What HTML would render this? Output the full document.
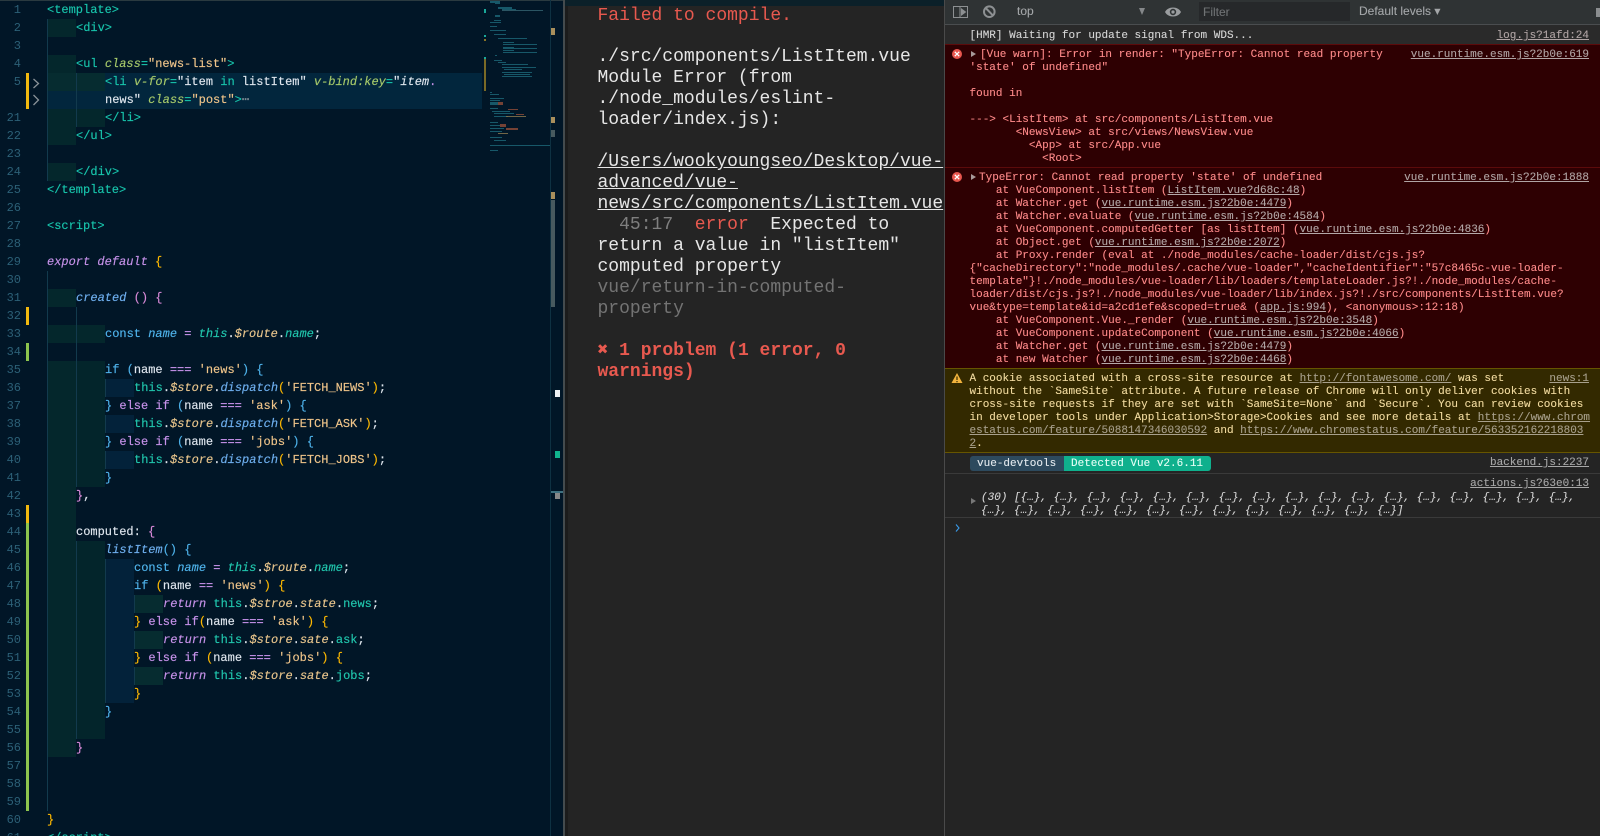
<!DOCTYPE html>
<html><head><meta charset="utf-8"><style>
html,body{margin:0;padding:0;background:#242424}
#r{position:relative;width:1600px;height:836px;overflow:hidden;background:#242424;font-family:"Liberation Mono",monospace}
#r div,#r span.a{position:absolute}
.b{background:#04272c}.g{background:#03252b}.n{background:#03223a}.d{background:#062c30}
.v{width:1px;background:#123a4d}
.ln,.t{height:18px;line-height:18px;font-size:12px;white-space:pre}
.ln{left:0;width:21px;text-align:right;color:#2c6077}
.t{color:#d6deeb;-webkit-text-stroke:.15px}
i{font-style:italic}
.T{color:#18c5ac}.A{color:#a6c96a}.S{color:#f0c58a}.W{color:#dfe6ee}.K{color:#c792ea}.Y{color:#ffb900}.B{color:#4fb4ec}.C{color:#21c7ae}.F{color:#6fb0f0}.D{color:#e8c58c}.P{color:#d98ad8}.L{color:#6fa8e8}
.m{left:597.5px;margin-top:1px;height:21px;line-height:21px;font-size:18px;white-space:pre;color:#e6e6e6}
.c{margin-top:1px;font-size:11px;line-height:13px;height:13px;white-space:pre;color:#ff8a8a;-webkit-text-stroke:.1px}
.u{text-decoration:underline;color:#b4a8a8}
.rt{right:11px;left:auto;color:#b0a4a4;text-decoration:underline}
.w{color:#f3dca0}
.w .u{color:#a8a08c}
.o{color:#d6d6d6}
</style></head><body><div id="r">

<div style="left:0;top:0;width:563px;height:836px;background:#011627"></div>
<div style="left:0;top:0;width:563px;height:1px;background:#2a3a40"></div>

<div style="left:47px;top:73px;width:435px;height:36px;background:#02263d"></div>

<div class="b" style="left:47px;top:19px;width:29px;height:18px"></div>
<div class="b" style="left:47px;top:55px;width:29px;height:18px"></div>
<div class="d" style="left:47px;top:73px;width:29px;height:18px"></div>
<div class="d" style="left:76px;top:73px;width:29px;height:18px"></div>
<div class="b" style="left:47px;top:109px;width:58px;height:18px"></div>
<div class="b" style="left:47px;top:127px;width:29px;height:18px"></div>
<div class="b" style="left:47px;top:163px;width:29px;height:18px"></div>
<div class="b" style="left:47px;top:289px;width:29px;height:18px"></div>
<div class="b" style="left:47px;top:325px;width:58px;height:18px"></div>
<div class="b" style="left:47px;top:361px;width:29px;height:396px"></div>
<div class="g" style="left:76px;top:361px;width:29px;height:126px"></div>
<div class="g" style="left:76px;top:541px;width:29px;height:198px"></div>
<div class="n" style="left:105px;top:379px;width:29px;height:18px"></div>
<div class="n" style="left:105px;top:415px;width:29px;height:18px"></div>
<div class="n" style="left:105px;top:451px;width:29px;height:18px"></div>
<div class="n" style="left:105px;top:559px;width:29px;height:144px"></div>
<div class="d" style="left:134px;top:595px;width:29px;height:18px"></div>
<div class="d" style="left:134px;top:631px;width:29px;height:18px"></div>
<div class="d" style="left:134px;top:667px;width:29px;height:18px"></div>

<div class="v" style="left:47px;top:19px;height:162px"></div>
<div class="v" style="left:76px;top:73px;height:54px"></div>
<div class="v" style="left:47px;top:271px;height:540px"></div>
<div class="v" style="left:76px;top:307px;height:180px"></div>
<div class="v" style="left:76px;top:541px;height:198px"></div>
<div class="v" style="left:105px;top:379px;height:18px"></div>
<div class="v" style="left:105px;top:415px;height:18px"></div>
<div class="v" style="left:105px;top:451px;height:18px"></div>
<div class="v" style="left:105px;top:559px;height:144px"></div>
<div class="v" style="left:134px;top:595px;height:18px"></div>
<div class="v" style="left:134px;top:631px;height:18px"></div>
<div class="v" style="left:134px;top:667px;height:18px"></div>

<div style="left:26px;top:73px;width:3px;height:36px;background:#f2b90f"></div>
<div style="left:26px;top:307px;width:3px;height:18px;background:#f2b90f"></div>
<div style="left:26px;top:343px;width:3px;height:18px;background:#8dc44e"></div>
<div style="left:26px;top:505px;width:3px;height:18px;background:#f2b90f"></div>
<div style="left:26px;top:523px;width:3px;height:288px;background:#8dc44e"></div>
<svg style="position:absolute;left:32px;top:77px" width="9" height="30" fill="none" stroke="#8a9298" stroke-width="1.3"><path d="M1.500 2l5 4.500-5 4.500M1.500 18l5 5-5 5"/></svg>

<div class="ln" style="top:1px">1</div><div class="ln" style="top:19px">2</div><div class="ln" style="top:37px">3</div><div class="ln" style="top:55px">4</div><div class="ln" style="top:73px">5</div>
<div class="ln" style="top:109px">21</div><div class="ln" style="top:127px">22</div><div class="ln" style="top:145px">23</div><div class="ln" style="top:163px">24</div><div class="ln" style="top:181px">25</div><div class="ln" style="top:199px">26</div><div class="ln" style="top:217px">27</div><div class="ln" style="top:235px">28</div><div class="ln" style="top:253px">29</div><div class="ln" style="top:271px">30</div><div class="ln" style="top:289px">31</div><div class="ln" style="top:307px">32</div><div class="ln" style="top:325px">33</div><div class="ln" style="top:343px">34</div><div class="ln" style="top:361px">35</div><div class="ln" style="top:379px">36</div><div class="ln" style="top:397px">37</div><div class="ln" style="top:415px">38</div><div class="ln" style="top:433px">39</div><div class="ln" style="top:451px">40</div><div class="ln" style="top:469px">41</div><div class="ln" style="top:487px">42</div><div class="ln" style="top:505px">43</div><div class="ln" style="top:523px">44</div><div class="ln" style="top:541px">45</div><div class="ln" style="top:559px">46</div><div class="ln" style="top:577px">47</div><div class="ln" style="top:595px">48</div><div class="ln" style="top:613px">49</div><div class="ln" style="top:631px">50</div><div class="ln" style="top:649px">51</div><div class="ln" style="top:667px">52</div><div class="ln" style="top:685px">53</div><div class="ln" style="top:703px">54</div><div class="ln" style="top:721px">55</div><div class="ln" style="top:739px">56</div><div class="ln" style="top:757px">57</div><div class="ln" style="top:775px">58</div><div class="ln" style="top:793px">59</div><div class="ln" style="top:811px">60</div><div class="ln" style="top:829px">61</div>

<div class="t T" style="left:47px;top:1px">&lt;template&gt;</div>
<div class="t T" style="left:76px;top:19px">&lt;div&gt;</div>
<div class="t" style="left:76px;top:55px"><span class="T">&lt;ul </span><i class="A">class</i><span class="T">=</span><span class="S">"news-list"</span><span class="T">&gt;</span></div>
<div class="t" style="left:105px;top:73px"><span class="T">&lt;li </span><i class="A">v-for</i><span class="T">=</span><span class="W">"item </span><span class="T">in</span><span class="W"> listItem" </span><i class="A">v-bind:key</i><span class="T">=</span><span class="W">"</span><i class="W">item</i><span class="K">.</span></div>
<div class="t" style="left:105px;top:91px"><span class="W">news" </span><i class="A">class</i><span class="T">=</span><span class="S">"post"</span><span class="T">&gt;</span><span style="color:#7a8a94">⋯</span></div>
<div class="t T" style="left:105px;top:109px">&lt;/li&gt;</div>
<div class="t T" style="left:76px;top:127px">&lt;/ul&gt;</div>
<div class="t T" style="left:76px;top:163px">&lt;/div&gt;</div>
<div class="t T" style="left:47px;top:181px">&lt;/template&gt;</div>
<div class="t T" style="left:47px;top:217px">&lt;script&gt;</div>
<div class="t" style="left:47px;top:253px"><i class="K">export default</i> <span class="Y">{</span></div>
<div class="t" style="left:76px;top:289px"><i class="F">created</i> <span class="P">()</span> <span class="P">{</span></div>
<div class="t" style="left:105px;top:325px"><span class="B">const</span> <i class="B">name</i> <span class="K">=</span> <i class="C">this</i><span class="W">.</span><i class="D">$route</i><span class="W">.</span><i class="C">name</i><span class="W">;</span></div>
<div class="t" style="left:105px;top:361px"><span class="B">if</span> <span class="B">(</span><span class="W">name</span> <span class="K">===</span> <span class="S">'news'</span><span class="B">)</span> <span class="B">{</span></div>
<div class="t" style="left:134px;top:379px"><span class="C">this</span><span class="W">.</span><i class="D">$store</i><span class="W">.</span><i class="F">dispatch</i><span class="Y">(</span><span class="S">'FETCH_NEWS'</span><span class="Y">)</span><span class="W">;</span></div>
<div class="t" style="left:105px;top:397px"><span class="B">}</span> <span class="K">else if</span> <span class="B">(</span><span class="W">name</span> <span class="K">===</span> <span class="S">'ask'</span><span class="B">)</span> <span class="B">{</span></div>
<div class="t" style="left:134px;top:415px"><span class="C">this</span><span class="W">.</span><i class="D">$store</i><span class="W">.</span><i class="F">dispatch</i><span class="Y">(</span><span class="S">'FETCH_ASK'</span><span class="Y">)</span><span class="W">;</span></div>
<div class="t" style="left:105px;top:433px"><span class="B">}</span> <span class="K">else if</span> <span class="B">(</span><span class="W">name</span> <span class="K">===</span> <span class="S">'jobs'</span><span class="B">)</span> <span class="B">{</span></div>
<div class="t" style="left:134px;top:451px"><span class="C">this</span><span class="W">.</span><i class="D">$store</i><span class="W">.</span><i class="F">dispatch</i><span class="Y">(</span><span class="S">'FETCH_JOBS'</span><span class="Y">)</span><span class="W">;</span></div>
<div class="t B" style="left:105px;top:469px">}</div>
<div class="t" style="left:76px;top:487px"><span class="P">}</span><span class="W">,</span></div>
<div class="t" style="left:76px;top:523px"><span class="W">computed:</span> <span class="P">{</span></div>
<div class="t" style="left:105px;top:541px"><i class="F">listItem</i><span class="B">()</span> <span class="B">{</span></div>
<div class="t" style="left:134px;top:559px"><span class="B">const</span> <i class="B">name</i> <span class="K">=</span> <i class="C">this</i><span class="W">.</span><i class="D">$route</i><span class="W">.</span><i class="C">name</i><span class="W">;</span></div>
<div class="t" style="left:134px;top:577px"><span class="B">if</span> <span class="Y">(</span><span class="W">name</span> <span class="K">==</span> <span class="S">'news'</span><span class="Y">)</span> <span class="Y">{</span></div>
<div class="t" style="left:163px;top:595px"><i class="K">return</i> <span class="C">this</span><span class="W">.</span><i class="D">$stroe</i><span class="W">.</span><i class="D">state</i><span class="W">.</span><span class="C">news</span><span class="W">;</span></div>
<div class="t" style="left:134px;top:613px"><span class="Y">}</span> <span class="K">else if</span><span class="Y">(</span><span class="W">name</span> <span class="K">===</span> <span class="S">'ask'</span><span class="Y">)</span> <span class="Y">{</span></div>
<div class="t" style="left:163px;top:631px"><i class="K">return</i> <span class="C">this</span><span class="W">.</span><i class="D">$store</i><span class="W">.</span><i class="D">sate</i><span class="W">.</span><span class="C">ask</span><span class="W">;</span></div>
<div class="t" style="left:134px;top:649px"><span class="Y">}</span> <span class="K">else if</span> <span class="Y">(</span><span class="W">name</span> <span class="K">===</span> <span class="S">'jobs'</span><span class="Y">)</span> <span class="Y">{</span></div>
<div class="t" style="left:163px;top:667px"><i class="K">return</i> <span class="C">this</span><span class="W">.</span><i class="D">$store</i><span class="W">.</span><i class="D">sate</i><span class="W">.</span><span class="C">jobs</span><span class="W">;</span></div>
<div class="t Y" style="left:134px;top:685px">}</div>
<div class="t B" style="left:105px;top:703px">}</div>
<div class="t P" style="left:76px;top:739px">}</div>
<div class="t Y" style="left:47px;top:811px">}</div>
<div class="t T" style="left:47px;top:829px">&lt;/script&gt;</div>

<svg style="position:absolute;left:484px;top:0" width="66" height="170" shape-rendering="crispEdges">
<g fill="#1f6f80" opacity=".75">
<rect x="6" y="1" width="10" height="2"/><rect x="11" y="3" width="5" height="1"/>
<rect x="14" y="7" width="14" height="2"/><rect x="18" y="9" width="14" height="1"/><rect x="18" y="10" width="41" height="1" fill="#3a6a78"/>
<rect x="11" y="15" width="5" height="2"/><rect x="10" y="20" width="7" height="1"/><rect x="6" y="22" width="11" height="1"/>
<rect x="6" y="26" width="7" height="1"/><rect x="6" y="30" width="16" height="1"/><rect x="10" y="34" width="12" height="1"/>
<rect x="14" y="38" width="29" height="1"/><rect x="19" y="42" width="11" height="1"/><rect x="19" y="44" width="34" height="1"/><rect x="19" y="47" width="11" height="1"/><rect x="19" y="48" width="34" height="1"/><rect x="19" y="50" width="11" height="1"/><rect x="19" y="52" width="34" height="1"/>
<rect x="11" y="55" width="2" height="1"/><rect x="10" y="60" width="8" height="1"/><rect x="14" y="62" width="8" height="1"/><rect x="18" y="64" width="26" height="1"/><rect x="18" y="67" width="34" height="1"/><rect x="20" y="69" width="18" height="1"/><rect x="18" y="72" width="30" height="1"/><rect x="20" y="74" width="26" height="1"/><rect x="18" y="76" width="30" height="1"/>
<rect x="6" y="92" width="2" height="1"/><rect x="6" y="94" width="9" height="1"/><rect x="6" y="98" width="14" height="1"/><rect x="6" y="100" width="10" height="1"/><rect x="6" y="102" width="8" height="3"/>
<rect x="6" y="108" width="8" height="1"/><rect x="8" y="111" width="18" height="1"/><rect x="10" y="113" width="20" height="1"/><rect x="10" y="116" width="14" height="1"/>
<rect x="6" y="122" width="8" height="1"/><rect x="6" y="125" width="10" height="1"/><rect x="6" y="128" width="14" height="1"/><rect x="6" y="131" width="12" height="1"/><rect x="6" y="137" width="12" height="1"/><rect x="10" y="140" width="12" height="1"/>
<rect x="6" y="145" width="60" height="1"/><rect x="6" y="150" width="8" height="1"/>
</g>
<g fill="#8a4a38" opacity=".85"><rect x="14" y="102" width="5" height="3"/><rect x="24" y="109" width="10" height="1"/><rect x="32" y="114" width="8" height="1"/><rect x="16" y="124" width="6" height="3"/><rect x="22" y="128" width="12" height="2"/></g>
<g fill="#8f7a50" opacity=".8"><rect x="22" y="116" width="20" height="1"/><rect x="14" y="133" width="10" height="1"/></g>
<rect x="0" y="9" width="2" height="4" fill="#1aa89a"/><rect x="0" y="35" width="2" height="2" fill="#1aa89a"/><rect x="0" y="39" width="2" height="2" fill="#8a7426"/><rect x="0" y="57" width="2" height="2" fill="#1aa89a"/><rect x="0" y="59" width="2" height="32" fill="#7a6a26"/>
</svg>

<div style="left:550px;top:0;width:1px;height:836px;background:#0e3142"></div>
<div style="left:551px;top:200px;width:4px;height:107px;background:#475a5f"></div>
<div style="left:551px;top:130px;width:4px;height:7px;background:#475a5f"></div>
<div style="left:551px;top:28px;width:4px;height:7px;background:#a98f5c"></div>
<div style="left:551px;top:117px;width:4px;height:6px;background:#a98f5c"></div>
<div style="left:551px;top:192px;width:4px;height:7px;background:#a98f5c"></div>
<div style="left:555px;top:390px;width:5px;height:7px;background:#eef0f2"></div>
<div style="left:555px;top:451px;width:5px;height:7px;background:#10b48e"></div>
<div style="left:551px;top:491px;width:12px;height:2px;background:#3f7180"></div>
<div style="left:555px;top:493px;width:5px;height:6px;background:#888"></div>
<div style="left:563px;top:0;width:2px;height:836px;background:#444b4e"></div>

<div style="left:565px;top:0;width:380px;height:836px;background:#242424"></div>
<div style="left:565px;top:6px;width:3px;height:830px;background:#1c1c1c"></div>
<div style="left:565px;top:0;width:380px;height:6px;background:#0b2029"></div>
<div class="m" style="top:5px;color:#e8594f">Failed to compile.</div>
<div class="m" style="top:46px">./src/components/ListItem.vue</div>
<div class="m" style="top:67px">Module Error (from</div>
<div class="m" style="top:88px">./node_modules/eslint-</div>
<div class="m" style="top:109px">loader/index.js):</div>
<div class="m" style="top:151px;text-decoration:underline">/Users/wookyoungseo/Desktop/vue-</div>
<div class="m" style="top:172px;text-decoration:underline">advanced/vue-</div>
<div class="m" style="top:193px;text-decoration:underline">news/src/components/ListItem.vue</div>
<div class="m" style="top:214px">  <span style="color:#7f7f7f">45:17</span>  <span style="color:#e8594f">error</span>  Expected to</div>
<div class="m" style="top:235px">return a value in "listItem"</div>
<div class="m" style="top:256px">computed property</div>
<div class="m" style="top:277px;color:#737373">vue/return-in-computed-</div>
<div class="m" style="top:298px;color:#737373">property</div>
<div class="m" style="top:340px;color:#e8594f;font-weight:bold">✖ 1 problem (1 error, 0</div>
<div class="m" style="top:361px;color:#e8594f;font-weight:bold">warnings)</div>

<div style="left:944px;top:0;width:1px;height:836px;background:#4a4a4a"></div>
<div style="left:945px;top:0;width:655px;height:25px;background:#2f3334"></div>
<div style="left:945px;top:24px;width:655px;height:1px;background:#4a4d4f"></div>
<svg style="position:absolute;left:952px;top:3px" width="46" height="18" fill="none" stroke="#8d9092"><rect x="1.500" y="3.500" width="14" height="11"/><path d="M8 3.500v11"/><path d="M9.500 6l4 3-4 3z" fill="#8d9092"/><circle cx="37.300" cy="8.700" r="5.300" stroke-width="2"/><path d="M33.700 5l7.200 7.400" stroke-width="2"/></svg>
<div class="c" style="margin-top:0;left:1017px;top:5px;font-family:'Liberation Sans',sans-serif;font-size:12px;color:#a4a7a9">top</div>
<div style="left:1139px;top:8px;width:0;height:0;border-left:3.500px solid transparent;border-right:3.500px solid transparent;border-top:7px solid #85888a"></div>
<svg style="position:absolute;left:1164px;top:5.500px" width="18" height="12"><path d="M1 6c3-6 13-6 16 0-3 6-13 6-16 0z" fill="#9a9d9f"/><circle cx="9" cy="6" r="3.200" fill="#2f3334"/><circle cx="9" cy="6" r="1.600" fill="#9a9d9f"/></svg>
<div style="left:1199px;top:2px;width:151px;height:19px;background:#26282a"></div>
<div class="c" style="margin-top:.5px;left:1203px;top:5px;font-family:'Liberation Sans',sans-serif;font-size:12px;color:#6f7274">Filter</div>
<div class="c" style="margin-top:.5px;left:1359px;top:4px;font-family:'Liberation Sans',sans-serif;font-size:12px;color:#a4a7a9">Default levels ▾</div>
<div style="left:1596px;top:8px;width:4px;height:9px;background:#8a8d8f"></div>

<div style="left:945px;top:25px;width:655px;height:19px;background:#2a2a2a"></div>
<div class="c o" style="left:969.500px;top:29px">[HMR] Waiting for update signal from WDS...</div>
<div class="c rt" style="top:29px">log.js?1afd:24</div>

<div style="left:945px;top:44px;width:655px;height:324px;background:#2e0002"></div>
<div style="left:945px;top:44px;width:655px;height:1px;background:#5c0b0b"></div>
<div style="left:945px;top:167px;width:655px;height:1px;background:#5c0b0b"></div>

<svg style="position:absolute;left:951px;top:48px" width="12" height="12"><circle cx="6" cy="6" r="5" fill="#e8564e"/><path d="M3.800 3.800l4.400 4.400M8.200 3.800l-4.400 4.400" stroke="#fff" stroke-width="1.300"/></svg>
<div style="left:971px;top:51px;width:0;height:0;border-top:3.500px solid transparent;border-bottom:3.500px solid transparent;border-left:5px solid #a89a9a"></div>
<div class="c" style="left:980px;top:48px">[Vue warn]: Error in render: "TypeError: Cannot read property</div>
<div class="c rt" style="top:48px">vue.runtime.esm.js?2b0e:619</div>
<div class="c" style="left:969.500px;top:61px">'state' of undefined"</div>
<div class="c" style="left:969.500px;top:87px">found in</div>
<div class="c" style="left:969.500px;top:113px">---&gt; &lt;ListItem&gt; at src/components/ListItem.vue</div>
<div class="c" style="left:969.500px;top:126px">       &lt;NewsView&gt; at src/views/NewsView.vue</div>
<div class="c" style="left:969.500px;top:139px">         &lt;App&gt; at src/App.vue</div>
<div class="c" style="left:969.500px;top:152px">           &lt;Root&gt;</div>

<svg style="position:absolute;left:951px;top:171px" width="12" height="12"><circle cx="6" cy="6" r="5" fill="#e8564e"/><path d="M3.800 3.800l4.400 4.400M8.200 3.800l-4.400 4.400" stroke="#fff" stroke-width="1.300"/></svg>
<div style="left:971px;top:174px;width:0;height:0;border-top:3.500px solid transparent;border-bottom:3.500px solid transparent;border-left:5px solid #a89a9a"></div>
<div class="c" style="left:979px;top:171px">TypeError: Cannot read property 'state' of undefined</div>
<div class="c rt" style="top:171px">vue.runtime.esm.js?2b0e:1888</div>
<div class="c" style="left:969.500px;top:184px">    at VueComponent.listItem (<span class="u">ListItem.vue?d68c:48</span>)</div>
<div class="c" style="left:969.500px;top:197px">    at Watcher.get (<span class="u">vue.runtime.esm.js?2b0e:4479</span>)</div>
<div class="c" style="left:969.500px;top:210px">    at Watcher.evaluate (<span class="u">vue.runtime.esm.js?2b0e:4584</span>)</div>
<div class="c" style="left:969.500px;top:223px">    at VueComponent.computedGetter [as listItem] (<span class="u">vue.runtime.esm.js?2b0e:4836</span>)</div>
<div class="c" style="left:969.500px;top:236px">    at Object.get (<span class="u">vue.runtime.esm.js?2b0e:2072</span>)</div>
<div class="c" style="left:969.500px;top:249px">    at Proxy.render (eval at ./node_modules/cache-loader/dist/cjs.js?</div>
<div class="c" style="left:969.500px;top:262px">{"cacheDirectory":"node_modules/.cache/vue-loader","cacheIdentifier":"57c8465c-vue-loader-</div>
<div class="c" style="left:969.500px;top:275px">template"}!./node_modules/vue-loader/lib/loaders/templateLoader.js?!./node_modules/cache-</div>
<div class="c" style="left:969.500px;top:288px">loader/dist/cjs.js?!./node_modules/vue-loader/lib/index.js?!./src/components/ListItem.vue?</div>
<div class="c" style="left:969.500px;top:301px">vue&amp;type=template&amp;id=a2cd1efe&amp;scoped=true&amp; (<span class="u">app.js:994</span>), &lt;anonymous&gt;:12:18)</div>
<div class="c" style="left:969.500px;top:314px">    at VueComponent.Vue._render (<span class="u">vue.runtime.esm.js?2b0e:3548</span>)</div>
<div class="c" style="left:969.500px;top:327px">    at VueComponent.updateComponent (<span class="u">vue.runtime.esm.js?2b0e:4066</span>)</div>
<div class="c" style="left:969.500px;top:340px">    at Watcher.get (<span class="u">vue.runtime.esm.js?2b0e:4479</span>)</div>
<div class="c" style="left:969.500px;top:353px">    at new Watcher (<span class="u">vue.runtime.esm.js?2b0e:4468</span>)</div>

<div style="left:945px;top:368px;width:655px;height:85px;background:#332900"></div>
<div style="left:945px;top:368px;width:655px;height:1px;background:#665500"></div>
<div style="left:945px;top:452px;width:655px;height:1px;background:#665500"></div>
<svg style="position:absolute;left:951px;top:372px" width="12" height="12"><path d="M6 1l5.500 10h-11z" fill="#f2b33d"/><path d="M6 4.500v3.500M6 9v1.200" stroke="#332900" stroke-width="1.200"/></svg>
<div class="c w" style="left:969.500px;top:372px">A cookie associated with a cross-site resource at <span class="u">http://fontawesome.com/</span> was set</div>
<div class="c rt" style="top:372px;color:#a8a08c">news:1</div>
<div class="c w" style="left:969.500px;top:385px">without the `SameSite` attribute. A future release of Chrome will only deliver cookies with</div>
<div class="c w" style="left:969.500px;top:398px">cross-site requests if they are set with `SameSite=None` and `Secure`. You can review cookies</div>
<div class="c w" style="left:969.500px;top:411px">in developer tools under Application&gt;Storage&gt;Cookies and see more details at <span class="u">https://www.chrom</span></div>
<div class="c w" style="left:969.500px;top:424px"><span class="u">estatus.com/feature/5088147346030592</span> and <span class="u">https://www.chromestatus.com/feature/563352162218803</span></div>
<div class="c w" style="left:969.500px;top:437px"><span class="u">2</span>.</div>

<div style="left:970px;top:456px;width:94px;height:15px;background:#2d4a5e;border-radius:3px 0 0 3px"></div>
<div style="left:1064px;top:456px;width:147px;height:15px;background:#0fb08d;border-radius:0 3px 3px 0"></div>
<div class="c" style="left:977px;top:457px;color:#e4eaee">vue-devtools</div>
<div class="c" style="left:1071px;top:457px;color:#e6fff6">Detected Vue v2.6.11</div>
<div class="c rt" style="top:456px;color:#a8a8a8">backend.js:2237</div>
<div style="left:945px;top:473px;width:655px;height:1px;background:#3a3a3a"></div>
<div class="c rt" style="top:477px;color:#a8a8a8">actions.js?63e0:13</div>
<div style="left:971px;top:498px;width:0;height:0;border-top:3.500px solid transparent;border-bottom:3.500px solid transparent;border-left:5px solid #777"></div>
<div class="c o" style="left:981px;top:491px;font-style:italic">(30) [{…}, {…}, {…}, {…}, {…}, {…}, {…}, {…}, {…}, {…}, {…}, {…}, {…}, {…}, {…}, {…}, {…},</div>
<div class="c o" style="left:981px;top:504px;font-style:italic">{…}, {…}, {…}, {…}, {…}, {…}, {…}, {…}, {…}, {…}, {…}, {…}, {…}]</div>
<div style="left:945px;top:517px;width:655px;height:1px;background:#3a3a3a"></div>
<svg style="position:absolute;left:954px;top:523px" width="8" height="10" fill="none" stroke="#3a9ae8" stroke-width="1.100"><path d="M2 1.500l3 3.500-3 3.500"/></svg>
</div></body></html>
